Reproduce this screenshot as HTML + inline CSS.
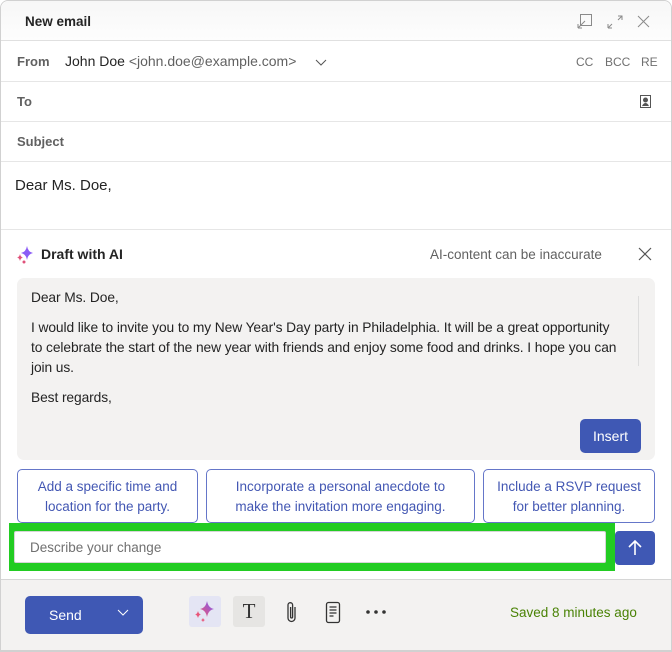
<!DOCTYPE html>
<html><head><meta charset="utf-8"><style>
*{box-sizing:border-box;margin:0;padding:0}
body{width:672px;height:652px;background:#fff;font-family:"Segoe UI","Liberation Sans",sans-serif;color:#242424;position:relative;overflow:hidden}
.abs{position:absolute}
.frame{left:0;top:0;width:672px;height:652px;border:1px solid #d1d1d1;border-radius:8px 8px 0 0;border-bottom-width:2px}
.hdr{left:1px;top:1px;width:670px;height:40px;background:linear-gradient(#f7f7f7,#fdfdfd);border-radius:8px 8px 0 0;border-bottom:1px solid #e0e0e0}
.line{left:1px;width:670px;height:1px;background:#e6e6e6}
.lbl{font-size:13px;font-weight:bold;color:#616161}
.t{white-space:nowrap}
.sug{border:1px solid #6576c9;border-radius:5px;color:#4357b3;font-size:13.5px;text-align:center;line-height:20px;padding-top:7px;height:54px;background:#fff;white-space:nowrap}
</style></head><body>
<div class="abs frame"></div>
<div class="abs hdr"></div>
<div class="abs t" style="left:25px;top:14px;font-size:13.5px;font-weight:bold">New email</div>
<svg class="abs" style="left:576px;top:12px" width="80" height="20" fill="none" stroke="#8a8a8a" stroke-width="1">
<rect x="4.5" y="2.5" width="11" height="11"/><path d="M2 16 L9 9 M2 16 h4 M2 16 v-4"/>
<path d="M42 4 h4 v4 M46 4 l-4 4 M32 16 h4 M32 16 v-4 M32 16 l4 -4"/>
<path d="M62 4 l11 11 M73 4 l-11 11"/></svg>
<div class="abs t lbl" style="left:17px;top:54px">From</div>
<div class="abs t" style="left:65px;top:53px;font-size:14px">John Doe <span style="color:#616161">&lt;john.doe@example.com&gt;</span></div>
<svg class="abs" style="left:314px;top:57px" width="14" height="10"><path d="M2 3 l5 5 l5 -5" fill="none" stroke="#555" stroke-width="1"/></svg>
<div class="abs t" style="left:576px;top:55px;font-size:12px;color:#707070;">CC</div>
<div class="abs t" style="left:605px;top:55px;font-size:12px;color:#707070;">BCC</div>
<div class="abs t" style="left:641px;top:55px;font-size:12px;color:#707070;">RE</div>
<div class="abs line" style="top:81px"></div>
<div class="abs t lbl" style="left:17px;top:94px">To</div>
<svg class="abs" style="left:638px;top:94px" width="14" height="16" fill="none" stroke="#555"><rect x="2.5" y="1.5" width="10" height="12"/><circle cx="7.5" cy="6" r="2" fill="#555"/><path d="M4.5 12 q3 -5 6 0" fill="#555"/></svg>
<div class="abs line" style="top:121px"></div>
<div class="abs t lbl" style="left:17px;top:134px">Subject</div>
<div class="abs line" style="top:161px"></div>
<div class="abs t" style="left:15px;top:177px;font-size:15px">Dear Ms. Doe,</div>
<div class="abs line" style="top:229px"></div>
<svg class="abs" style="left:15px;top:245px" width="20" height="20"><path d="M12 1 q1 6 6 7 q-5 1 -6 7 q-1 -6 -6 -7 q5 -1 6 -7z" fill="#8b5cf6"/><path d="M5 9 q.6 3 3 3.5 q-2.4 .5 -3 3.5 q-.6 -3 -3 -3.5 q2.4 -.5 3 -3.5z" fill="#e0527a"/><circle cx="9" cy="17" r="1.5" fill="#e0527a"/></svg>
<div class="abs t" style="left:41px;top:246px;font-size:14px;font-weight:bold">Draft with AI</div>
<div class="abs t" style="left:430px;top:247px;font-size:13.5px;color:#616161">AI-content can be inaccurate</div>
<svg class="abs" style="left:638px;top:247px" width="14" height="14"><path d="M1 1 l12 12 M13 1 l-12 12" stroke="#555" stroke-width="1.2"/></svg>
<div class="abs" style="left:17px;top:278px;width:638px;height:182px;background:#f3f2f1;border-radius:7px"></div>
<div class="abs" style="left:638px;top:296px;width:1px;height:70px;background:#ddd"></div>
<div class="abs t" style="left:31px;top:288px;font-size:13.8px;line-height:20px;letter-spacing:-0.1px">Dear Ms. Doe,<br><div style="height:10px"></div>I would like to invite you to my New Year's Day party in Philadelphia. It will be a great opportunity<br>to celebrate the start of the new year with friends and enjoy some food and drinks. I hope you can<br>join us.<div style="height:10px"></div>Best regards,</div>
<div class="abs" style="left:580px;top:419px;width:61px;height:34px;background:#3f58b4;border-radius:5px;color:#fff;font-size:14px;text-align:center;line-height:34px">Insert</div>
<div class="abs sug" style="left:17px;top:469px;width:181px">Add a specific time and<br>location for the party.</div>
<div class="abs sug" style="left:206px;top:469px;width:269px">Incorporate a personal anecdote to<br>make the invitation more engaging.</div>
<div class="abs sug" style="left:483px;top:469px;width:172px">Include a RSVP request<br>for better planning.</div>
<div class="abs" style="left:9px;top:523px;width:606px;height:48px;background:#22cc22"></div>
<div class="abs" style="left:14px;top:531px;width:592px;height:32px;background:#fff;border:1px solid #d6d6d6;border-radius:2px"></div>
<div class="abs t" style="left:30px;top:540px;font-size:13.5px;color:#707070">Describe your change</div>
<div class="abs" style="left:615px;top:531px;width:40px;height:34px;background:#3f58b4;border-radius:4px"></div>
<svg class="abs" style="left:625px;top:538px" width="20" height="20"><path d="M10 3 v14 M4 9 l6 -6 l6 6" fill="none" stroke="#fff" stroke-width="1.6"/></svg>
<div class="abs" style="left:1px;top:579px;width:670px;height:71px;background:#f3f2f1;border-top:1px solid #d6d6d6"></div>
<div class="abs" style="left:25px;top:596px;width:118px;height:38px;background:#3f58b4;border-radius:5px"></div>
<div class="abs t" style="left:49px;top:607px;font-size:14px;color:#fff">Send</div>
<svg class="abs" style="left:117px;top:609px" width="12" height="8"><path d="M1 1 l5 5 l5 -5" fill="none" stroke="#fff"/></svg>
<div class="abs" style="left:189px;top:596px;width:32px;height:31px;background:#e4e5f4;border-radius:3px"></div>
<svg class="abs" style="left:192px;top:599px" width="26" height="26"><defs><linearGradient id="g" x1="0" y1="1" x2="1" y2="0"><stop offset="0" stop-color="#f0566e"/><stop offset="1" stop-color="#7b5cf8"/></linearGradient></defs><path d="M15 2 q1.3 7 7 8 q-5.7 1 -7 8 q-1.3 -7 -7 -8 q5.7 -1 7 -8z" fill="url(#g)"/><path d="M6 12 q.7 3 3 3.5 q-2.3 .5 -3 3.5 q-.7 -3 -3 -3.5 q2.3 -.5 3 -3.5z" fill="#e8567a"/><path d="M11 19 q.4 1.6 2 2 q-1.6 .4 -2 2 q-.4 -1.6 -2 -2 q1.6 -.4 2 -2z" fill="#e8567a"/></svg>
<div class="abs" style="left:233px;top:596px;width:32px;height:31px;background:#e6e5e3;border-radius:3px;font-family:'Liberation Serif',serif;font-size:21px;text-align:center;line-height:31px;color:#333">T</div>
<svg class="abs" style="left:284px;top:600px" width="16" height="26"><path d="M11 7 v11 a3.5 3.5 0 0 1 -7 0 v-13 a2.3 2.3 0 0 1 4.6 0 v12 a1 1 0 0 1 -2 0 v-10" fill="none" stroke="#333" stroke-width="1.3"/></svg>
<svg class="abs" style="left:324px;top:601px" width="18" height="24"><rect x="2.5" y="1.5" width="13" height="20" rx="2" fill="none" stroke="#333" stroke-width="1.3"/><path d="M5.5 6h7M5.5 9h7M5.5 12h7M5.5 15h4" stroke="#333" stroke-width="1.2"/></svg>
<svg class="abs" style="left:365px;top:608px" width="22" height="8"><circle cx="3" cy="4" r="1.8" fill="#333"/><circle cx="11" cy="4" r="1.8" fill="#333"/><circle cx="19" cy="4" r="1.8" fill="#333"/></svg>
<div class="abs t" style="left:510px;top:605px;font-size:13.5px;color:#498205">Saved 8 minutes ago</div>
</body></html>
